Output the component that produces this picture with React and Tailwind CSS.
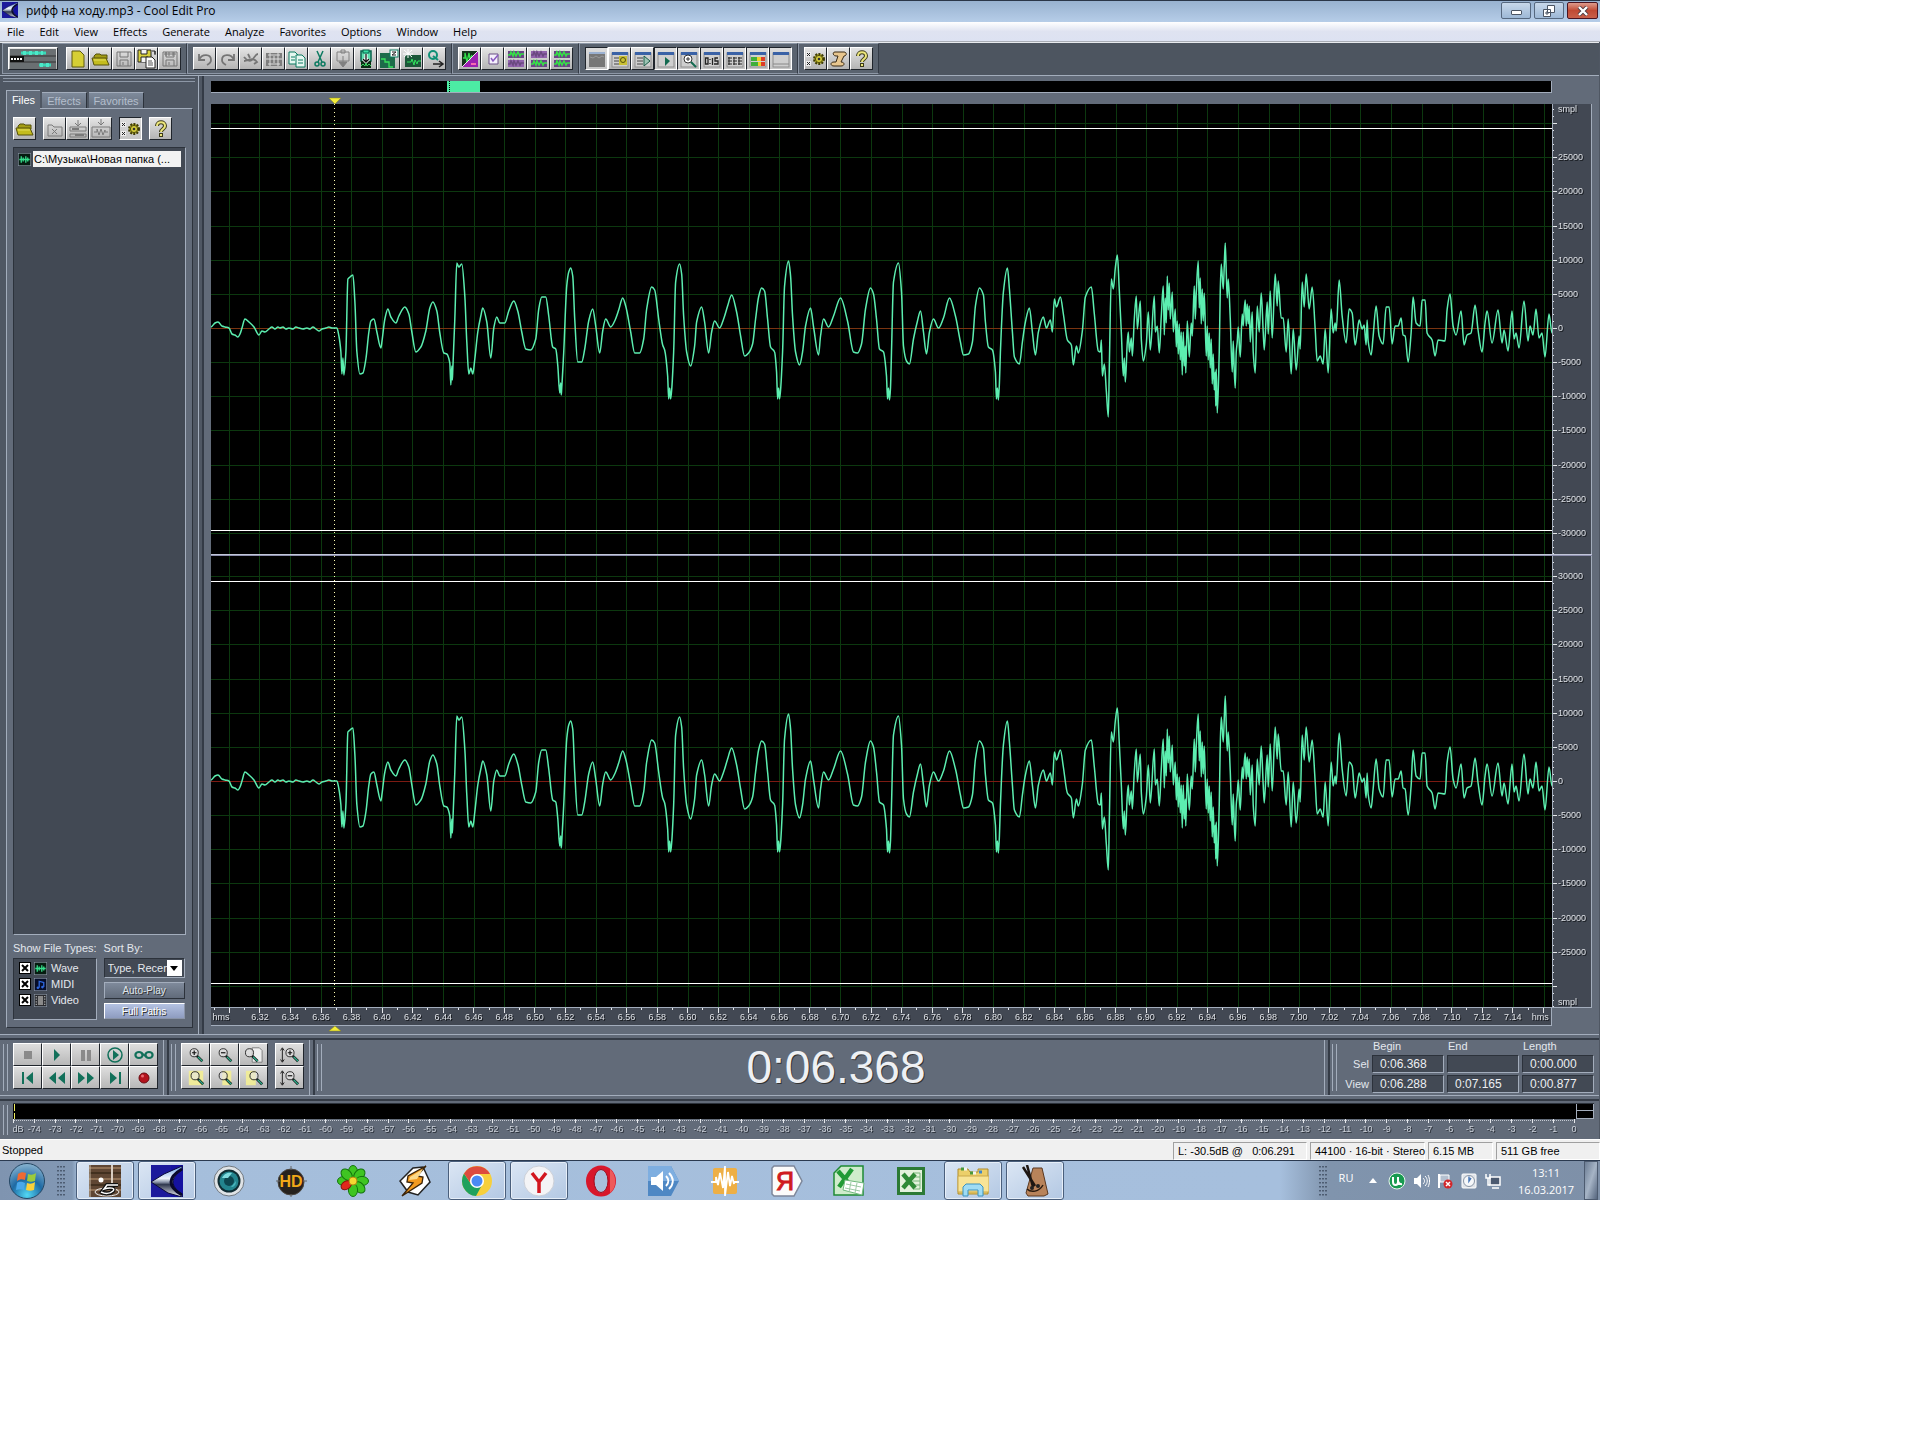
import clsx from "clsx";

// Waveform samples: x, y offset from the zero line
const SAMPLES = [
  0, -1, 4, -5, 7, -6, 11, -2, 14, -1, 18, 0, 21, 6, 24, 7, 27, 9, 29, 6, 31, 0, 34, -9, 38, -6, 43, -1, 48, 7, 51, 3, 54, 4, 58, 1,
  61, -1, 64, 1, 67, -1, 69, 0, 72, -1, 75, 1, 78, 0, 82, 1, 85, -1, 88, 0, 92, 1, 96, 0, 99, 1, 102, -1, 105, 1, 108, 3, 111, 1, 115, 0, 118, -1, 121, 0, 126, 0,
  128, 8, 130, 24, 131, 46, 132, 30, 133, 47, 135, 24, 137, -49, 139, -51, 142, -53, 144, -26, 146, 24, 149, 46, 152, 45, 155, 31, 158, 4, 160, -7, 163, -9,
  166, 4, 170, 20, 171, 14, 174, -9, 177, -19, 180, -11, 185, -5, 188, -12, 194, -21, 198, -14, 201, 4, 205, 24, 210, 19, 215, 3, 219, -20, 222, -26,
  226, -17, 229, 5, 233, 25, 236, 26, 239, 35, 240, 57, 241, 38, 241.5, 52, 242, 41, 244, -9, 246, -65, 248, -61, 251, -64, 254, -32, 256, 14, 258, 46, 260, 40, 262, 46,
  264, 31, 267, 4, 270, -12, 272, -20, 276, -6, 280, 30, 283, 0, 286, -11, 289, -5, 294, -5, 298, -17, 303, -27, 307, -17, 311, 4, 315, 21, 320, 22,
  325, 11, 328, -19, 331, -31, 335, -31, 338, -12, 342, 19, 345, 21, 347, 37, 349, 65, 350, 55, 350.5, 67, 351, 60, 353, 24, 356, -42, 358, -56, 360, -60, 362, -52,
  364, -9, 367, 34, 371, 34, 374, 21, 378, -7, 382, -19, 385, -2, 389, 25, 392, 3, 395, -9, 400, -1, 404, -7, 408, -18, 412, -30, 415, -22, 420, 4,
  424, 25, 429, 25, 433, 11, 436, -19, 441, -41, 444, -38, 448, -9, 452, 17, 454, 22, 457, 48, 458, 71, 459, 60, 460, 71, 461, 62, 463, 24, 465, -46, 469, -64,
  471, -54, 473, -12, 476, 24, 480, 38, 484, 18, 486, -6, 491, -21, 494, -6, 498, 25, 501, 4, 504, -7, 509, 0, 513, -9, 517, -22, 521, -33, 526, -16,
  530, 8, 534, 28, 538, 25, 542, 16, 545, -9, 548, -31, 551, -40, 554, -37, 557, -9, 560, 19, 564, 24, 566, 44, 567, 71, 568, 60, 569, 71, 570, 62, 572, 24, 574, -42,
  578, -67, 580, -52, 582, -12, 585, 24, 589, 37, 592, 24, 595, -2, 600, -20, 603, -1, 608, 27, 610, 8, 613, -9, 618, -1, 623, -12, 630, -30, 637, -7,
  643, 24, 647, 25, 651, 16, 655, -19, 660, -40, 663, -34, 666, -9, 669, 21, 673, 24, 676, 48, 677, 71, 678, 60, 679, 72, 680, 60, 681, 24, 683, -46, 688, -65,
  691, -36, 693, 18, 696, 33, 699, 36, 703, 11, 707, -7, 710, -17, 713, 4, 716, 26, 719, 4, 723, -9, 728, 0, 733, -10, 739, -30, 745, -12, 750, 14,
  753, 27, 758, 26, 762, 14, 765, -22, 769, -40, 773, -33, 775, -6, 778, 19, 782, 22, 785, 44, 786, 71, 787, 60, 788, 72, 789, 55, 790, 24, 793, -36, 797, -60,
  799, -39, 802, 4, 804, 29, 809, 36, 812, 14, 815, -6, 819, -20, 822, 4, 825, 27, 828, 4, 833, -11, 836, 0, 840, -8, 842, 4, 844, -29, 846, -21, 850, -31,
  853, -14, 857, 12, 861, 17, 863, 37, 866, 18, 868, 25, 872, 3, 875, -31, 881, -41, 884, -14, 888, 23, 890, 24, 891, 12, 892, 48, 894, 36, 896, 63,
  898, 89, 899, 38, 901, -49, 903, -39, 905, -60, 907, -73, 909, -37, 911, 4, 913, 48, 914, 30, 915, 54, 917, 14, 918, 4, 919, 24, 921, 10, 922, 28, 924, -9, 926, -32,
  927, 1, 930, -27, 931, 11, 933, 33, 936, 16, 938, -16, 940, 22, 944, -32, 945, 4, 947, -2, 949, 25, 951, -12, 953, -42, 954, 7, 955, -30, 956, -5, 957, -52,
  958, -18, 959, -45, 960, -9, 962, -36, 963, 4, 965, -19, 966, 19, 967, -7, 968, 26, 969, -4, 970, 32, 971, 4, 972, 47, 973, 4, 974, 38, 975, 18, 975.5, 45, 977, -7, 979, 29, 981, -5, 982, 8, 984, -42,
  985, -9, 986, -35, 988, -67, 989, -20, 990, -50, 991, -4, 992, -39, 993, -7, 994, -35, 996, 28, 997, -2, 998, 32, 999, 5, 1000, 40, 1001, 11, 1002, 56, 1003, 26, 1004, 62, 1005, 44, 1005.5, 78, 1006, 41, 1007, 85, 1009, 24,
  1010, -36, 1011, -64, 1013, -39, 1014, -62, 1015, -85, 1016, -56, 1017, -30, 1018, -49, 1020, -10, 1022, 44, 1023, 13, 1024, 42, 1025, 60, 1026, 24, 1027, 14, 1028, -1, 1030, 29, 1032, -14, 1033, -2, 1034, -18, 1035, -28,
  1036, -2, 1037, -24, 1038, -4, 1039, -22, 1040, 14, 1042, -16, 1043, 24, 1045, 45, 1047, -22, 1049, 4, 1051, -35, 1053, 4, 1054, 22, 1057, -26, 1058, 6, 1060, -37, 1062, 10, 1065, -54,
  1067, -22, 1068, -47, 1071, -10, 1073, -10, 1076, 24, 1078, -9, 1081, 46, 1083, 1, 1086, 42, 1089, 8, 1090, 21, 1092, -46, 1094, -21, 1096, -54,
  1099, -19, 1102, -41, 1105, 1, 1107, 33, 1110, 28, 1113, 36, 1115, 1, 1118, 45, 1121, -19, 1123, 5, 1125, -5, 1126, 3, 1129, -48, 1132, -12, 1136, 15,
  1139, -19, 1142, -15, 1145, 17, 1147, 5, 1149, -8, 1152, 1, 1154, -3, 1156, 17, 1157, -8, 1158, 13, 1161, 27, 1163, 8, 1166, -22, 1169, 8, 1173, 16,
  1176, -21, 1179, -21, 1182, 16, 1185, -2, 1188, -2, 1191, -10, 1193, 7, 1195, 8, 1198, 34, 1201, 5, 1203, -31, 1206, -5, 1210, -2, 1212, -28,
  1215, -28, 1217, 5, 1222, 12, 1225, 28, 1228, 12, 1235, 13, 1237, -18, 1240, -34, 1243, -2, 1246, 7, 1251, -17, 1254, 17, 1257, 7, 1261, 5,
  1265, -23, 1268, 2, 1272, 24, 1275, -5, 1277, -17, 1282, 15, 1288, -18, 1292, 15, 1294, 2, 1298, 23, 1302, -17, 1304, 11, 1306, 5, 1309, 20,
  1314, -27, 1318, 13, 1320, -2, 1323, 7, 1326, -19, 1329, 10, 1332, 5, 1335, 29, 1339, -14, 1342, 5,
];

// Cubic curve through every sample, flat at the peaks so that it never overshoots
function buildWavePath(samples) {
  const n = samples.length / 2;
  const x = (i) => samples[i * 2];
  const y = (i) => samples[i * 2 + 1];
  const slope = (i) => (y(i + 1) - y(i)) / (x(i + 1) - x(i));
  const tangent = (i) => {
    if (i === 0 || i === n - 1) return 0;
    const a = slope(i - 1);
    const b = slope(i);
    return a * b <= 0 ? 0 : (2 * a * b) / (a + b);
  };
  let d = `M${x(0)} ${y(0)}`;
  for (let i = 0; i < n - 1; i++) {
    const h = (x(i + 1) - x(i)) / 3;
    d += `C${(x(i) + h).toFixed(1)} ${(y(i) + h * tangent(i)).toFixed(1)} ${(x(i + 1) - h).toFixed(1)} ${(y(i + 1) - h * tangent(i + 1)).toFixed(1)} ${x(i + 1)} ${y(i + 1)}`;
  }
  return d;
}

const WAVE_PATH = buildWavePath(SAMPLES);

const VIEW_START = 6.288;
const VIEW_LENGTH = 0.877;
const CURSOR = "9.24%";

const pct = (t) => `${((t - VIEW_START) / VIEW_LENGTH) * 100}%`;

const GRID_TIMES = Array.from({ length: 44 }, (_, i) => 6.3 + i * 0.02);
const STEP = 34.15; // pixels for 5000 samples

/* ---------- small parts ---------- */

function Ico({ children, size = 20, className }) {
  return (
    <svg viewBox="0 0 20 20" width={size} height={size} fill="none" className={className} aria-hidden="true">
      {children}
    </svg>
  );
}

function ToolButton({ label, pressed, wide, children }) {
  return (
    <button
      type="button"
      aria-label={label}
      className={clsx(
        "flex h-[23px] shrink-0 items-center justify-center border bg-linear-to-b",
        wide ? "w-[50px]" : "w-[23px]",
        pressed
          ? "border-t-[#20252c] border-r-white border-b-white border-l-[#20252c] from-[#dcdcdc] to-[#c6c6c6]"
          : "border-t-white border-r-[#20252c] border-b-[#20252c] border-l-white from-[#e4e4e4] to-[#b4b4b4]"
      )}
    >
      {children}
    </button>
  );
}

function PadButton({ label, children }) {
  return (
    <button
      type="button"
      aria-label={label}
      className="flex h-[23px] w-[29px] items-center justify-center border border-t-white border-r-[#20252c] border-b-[#20252c] border-l-white bg-linear-to-b from-[#dedede] to-[#b8b8b8]"
    >
      {children}
    </button>
  );
}

function Grip() {
  return <div className="my-1 w-[5px] shrink-0 self-stretch border-x border-[#a3adbc]" />;
}

function VSplit() {
  return <div className="w-[6px] shrink-0 self-stretch border-r-2 border-l border-r-[#343b46] border-l-[#a3adbc]" />;
}

function HSplit() {
  return <div className="h-[6px] border-t border-b-2 border-t-[#a3adbc] border-b-[#343b46] bg-[#626b79]" />;
}

/* ---------- toolbar icons ---------- */

const FOLDER = (
  <>
    <path d="M3 15V7l2-2h4l1 1h6v4" fill="#a39c14" stroke="#55510a" />
    <path d="M3 16L1 9h14l3 7z" fill="#c4bc1e" stroke="#55510a" />
    <path d="M3 11h12" stroke="#e4de5a" />
  </>
);

const GEAR = (
  <>
    <path d="M0 3h5v5H0zM0 12h5v5H0z" fill="#eee" />
    <path d="M1 4l3 3m0-3L1 7M1 13l3 3m0-3l-3 3" stroke="#222" />
    <circle cx="13" cy="10" r="5" fill="#c6be28" stroke="#3d3a08" strokeWidth="2" strokeDasharray="2 1.2" />
    <circle cx="13" cy="10" r="3.6" fill="#d3cb3a" stroke="#4f4b0c" />
    <circle cx="13" cy="10" r="1.3" fill="#333" />
  </>
);

const HELP = (
  <>
    <path d="M6 7c0-5 8-5 8 0 0 3-4 3-4 6" stroke="#3c3a18" strokeWidth="4" />
    <path d="M6 7c0-5 8-5 8 0 0 3-4 3-4 6" stroke="#ece67c" strokeWidth="2" />
    <rect x="8.500" y="14.500" width="3" height="3" fill="#ece67c" stroke="#3c3a18" />
  </>
);

const DISK = <path d="M3 3h14v14H3zM6 3v5h8V3M6 17v-6h8v6M9 13v3" />;

const WIN = (
  <>
    <rect x="2" y="4" width="16" height="14" fill="#cfcfcf" stroke="#8d8d8d" />
    <rect x="2" y="3" width="16" height="3" fill="#3a62a6" />
  </>
);

const FILE_ICONS = [
  ["New", <path d="M4 2h8l4 4v12H4z" fill="#d6cf34" stroke="#5d590e" />],
  ["Open", FOLDER],
  ["Save", <g stroke="#757575">{DISK}</g>],
  ["Save As", <>
    <path d="M1 1h13v12H1z" fill="#d8d03c" stroke="#222" />
    <path d="M4 1v4h6V1M4 13V8h7v5" fill="#f3f3f3" stroke="#222" />
    <path d="M15 2h3v3m0-3v4" stroke="#222" />
    <path d="M9 8h6l3 3v8H9z" fill="#fff" stroke="#222" />
    <path d="M11 12h4m-4 2h5m-5 2h5" stroke="#555" />
  </>],
  ["Save Selection", <><g stroke="#757575">{DISK}</g><path d="M4 5h12M6 3v4m3-4v4m4-4v4" stroke="#757575" /></>],
];

const EDIT_ICONS = [
  ["Undo", <path d="M4 5v6h6M4 11c3-7 12-6 12 0 0 3-2 4-4 5" stroke="#757575" strokeWidth="1.800" />],
  ["Redo", <path d="M16 5v6h-6M16 11C13 4 4 5 4 11c0 3 2 4 4 5" stroke="#757575" strokeWidth="1.800" />],
  ["Repeat", <path d="M3 8c3 4 7 5 9 2s3-5 5-5M3 12c5 0 8-5 13 1l-3 2M7 5l2 4" stroke="#757575" strokeWidth="1.800" />],
  ["Trim", <><rect x="2" y="4" width="16" height="13" fill="#7d7d7d" /><path d="M2 10h16M4 6h12M4 15h12M6 4v13M10 7v7M14 4v13" stroke="#ddd" /></>],
  ["Copy", <>
    <path d="M2 3h6l3 3v9H2z" fill="#e6f7f0" stroke="#0c7a60" />
    <path d="M9 6h6l3 3v9H9z" fill="#e6f7f0" stroke="#0c7a60" />
    <path d="M4 8h4M4 11h4M11 11h5m-5 3h5" stroke="#0c7a60" />
  </>],
  ["Cut", <>
    <path d="M7 2l5 11M13 2L8 13" stroke="#0c7a60" strokeWidth="1.500" />
    <circle cx="7" cy="15" r="2" stroke="#0c7a60" strokeWidth="1.500" />
    <circle cx="13" cy="15" r="2" stroke="#0c7a60" strokeWidth="1.500" />
  </>],
  ["Paste", <><path d="M4 3h12v9H4zM8 1h4v3H8z" stroke="#808080" /><path d="M10 7v10m-4-4l4 5 4-5z" fill="#808080" stroke="#808080" /></>],
  ["Mix Paste", <>
    <rect x="5" y="2" width="10" height="10" fill="#5fe0b0" stroke="#08634c" strokeWidth="1.500" />
    <rect x="7" y="1" width="6" height="3" fill="#3be0a4" stroke="#08634c" />
    <rect x="5" y="12" width="10" height="7" fill="#0a2c14" />
    <path d="M10 5v7m-3-2l3 3 3-3" stroke="#fff" strokeWidth="3" />
    <path d="M10 5v7m-3-2l3 3 3-3" stroke="#111" strokeWidth="1.300" />
    <path d="M5 17l2-2 2 2 1-3 1 3 2-2 2 2" stroke="#35d35c" />
  </>],
  ["Zero Cross", <>
    <rect x="1" y="4" width="15" height="15" fill="#1d6b4a" />
    <path d="M2 10h4v3h4v5h4" stroke="#38e25c" strokeWidth="1.300" />
    <rect x="11" y="1" width="8" height="7" fill="#fff" stroke="#0c7a60" />
    <path d="M13 3h4l-4 3h4" stroke="#222" />
  </>],
  ["Click Removal", <>
    <rect x="3" y="6" width="16" height="12" fill="#1b5638" />
    <path d="M5 13h4l1-3 2 6 1-5 2 4 1-3h3" stroke="#31e05c" />
    <path d="M6 0v9M2 1l8 7M10 1L2 8M1 5h10" stroke="#fff" />
  </>],
  ["Quick Filter", <>
    <circle cx="8" cy="6" r="4" stroke="#109076" strokeWidth="2" />
    <path d="M8 7l5 4" stroke="#109076" strokeWidth="2" />
    <path d="M8 15h9m-3-3l4 3-4 3" stroke="#222" strokeWidth="1.500" />
  </>],
];

const WavePair = ({ a, b }) => (
  <>
    <rect x="2" y="2" width="16" height="7" fill={a ? "#6b4386" : "#9163ac"} />
    <rect x="2" y="11" width="16" height="7" fill={b ? "#6b4386" : "#9163ac"} />
    <path d="M2 6h2l1-3 2 4 1-4 2 4 2-4 2 4 1-2h3" stroke={a ? "#35e046" : "#6b4a80"} strokeWidth="1.600" />
    <path d="M2 15h2l1-3 2 4 1-4 2 4 2-4 2 4 1-2h3" stroke={b ? "#35e046" : "#6b4a80"} strokeWidth="1.600" />
  </>
);

const CHANNEL_ICONS = [
  ["Spectral View", <>
    <path d="M2 2h16L2 18z" fill="#16321c" />
    <path d="M18 2v16H2z" fill="#9c1fb0" />
    <path d="M3 9h2V4l2 9 2-9 1 6 2-4" stroke="#33e04c" strokeWidth="1.300" />
    <path d="M2 18L18 2" stroke="#e8e8e8" />
    <path d="M11 15h5" stroke="#f56ab0" strokeWidth="2" />
  </>],
  ["Snapping", <><path d="M6 5h9v10H6z" fill="#f5f0fb" stroke="#6a5086" /><path d="M8 9l2 3 5-6" stroke="#8a5ac0" strokeWidth="1.500" /></>],
  ["Left Channel", <WavePair a />],
  ["Right Channel", <WavePair b />],
  ["Both Channels", <WavePair a b />],
];

const WINDOW_ICONS = [
  ["Organizer", true, <><rect x="2" y="4" width="16" height="14" fill="#777" /><rect x="2" y="3" width="16" height="2" fill="#9ab0d0" /><path d="M3 8l3 1 3-2 3 2 3-2 2 1" stroke="#999" /></>],
  ["Cue List", false, <>{WIN}<path d="M4 9h5M4 12h5M4 15h6" stroke="#444" /><rect x="9" y="7" width="8" height="9" fill="#c9c034" /><circle cx="13" cy="11" r="2.500" stroke="#55500c" /></>],
  ["Play List", false, <>{WIN}<path d="M4 9h6M4 12h6M4 15h6" stroke="#444" /><path d="M11 7l6 5-6 5z" fill="#9cc4b4" stroke="#1c5c48" /></>],
  ["Transport", true, <>{WIN}<path d="M9 8l5 4-5 5z" fill="#126a50" /></>],
  ["Zoom Controls", true, <>{WIN}<circle cx="9" cy="10" r="4" fill="#fff" stroke="#333" /><path d="M7 10h4M9 8v4" stroke="#333" /><path d="M12 13l5 5" stroke="#126a50" strokeWidth="2" /></>],
  ["Time Window", true, <>{WIN}<path d="M3.500 9h2.500v6H3.500zM8 10v1m0 3v1M10.500 9v7M16 9h-3v3h3v3h-4" stroke="#222" strokeWidth="1.300" /></>],
  ["Selection View", true, <>{WIN}<path d="M3 9h4M3 12h4M3 15h4M8 9h4m-4 3h4m-4 3h4m1-6h4m-4 3h4m-4 3h4M4 8v8m5-8v8m5-8v8" stroke="#222" /></>],
  ["Level Meters", true, <>{WIN}<path d="M3 8h6v4H3zM3 13h7v4H3z" fill="#3fae3a" /><path d="M9 8h4v4H9zM10 13h3v4h-3z" fill="#ecd22c" /><path d="M13 8h4v4h-4zM13 13h4v4h-4z" fill="#dd3d26" /></>],
  ["Status Bar", true, <>{WIN}<path d="M2 15h16" stroke="#888" /></>],
];

const HELP_ICONS = [
  ["Settings", GEAR],
  ["Scripts", <path d="M6 3h9c3 0 3 4 0 4l-3 6c4 0 4 4 0 4H5c-4 0-4-4 0-4h2l2-6H7c-3 0-4-4-1-4z" fill="#e8c68e" stroke="#3b2b14" />],
  ["Help", HELP],
];

function ToolGroup({ children }) {
  return (
    <div className="flex h-[31px] items-center border-y border-r border-l border-y-[#8d97a6] border-r-[#343b46] border-l-[#8d97a6] bg-[#5a636f] px-[5px]">
      {children}
    </div>
  );
}

/* ---------- logos ---------- */

function AppLogo({ size }) {
  return (
    <svg viewBox="0 0 32 32" width={size} height={size} aria-hidden="true">
      <defs>
        <linearGradient id={`silver${size}`} x1="0" y1="0" x2="0" y2="1">
          <stop offset="0" stopColor="#6fa4e8" />
          <stop offset=".4" stopColor="#eef4fb" />
          <stop offset=".52" stopColor="#8a94a8" />
          <stop offset=".6" stopColor="#30384e" />
          <stop offset="1" stopColor="#eef1f6" />
        </linearGradient>
      </defs>
      <rect width="32" height="32" fill="#1c1a9c" />
      <path d="M20 0h12v32H20z" fill="#1512a0" />
      <path d="M0 17L13 9 31 1v4c-6 4-9 8-9 12s3 8 9 12v3l-14-4z" fill={`url(#silver${size})`} stroke="#0a0a3a" />
      <path d="M31 4c-7 4-11 8-11 13s4 9 11 13" stroke="#0a0a2c" strokeWidth="3" fill="none" />
    </svg>
  );
}

/* ---------- header ---------- */

function TitleBar() {
  return (
    <header className="flex h-[22px] items-start border-t border-[#2a3648] bg-linear-to-b from-[#98b2d0] to-[#b6cde8] pr-[2px] pl-[2px]">
      <div className="pt-px">
        <AppLogo size={16} />
      </div>
      <h1 className="ml-2 font-['Open_Sans','Noto_Sans',sans-serif] text-[12px] leading-[20px] text-black">
        рифф на ходу.mp3 - Cool Edit Pro
      </h1>
      <div className="ml-auto flex gap-[3px] pt-px">
        <button type="button" aria-label="Minimize" className="flex h-[17px] w-[30px] items-center justify-center rounded-[2px] border border-[#56687f] bg-linear-to-b from-[#c8d8ea] to-[#9db8d6]">
          <span className="mt-1 h-[5px] w-[11px] rounded-[1px] border border-[#4b5564] bg-white" />
        </button>
        <button type="button" aria-label="Restore" className="flex h-[17px] w-[30px] items-center justify-center rounded-[2px] border border-[#56687f] bg-linear-to-b from-[#c8d8ea] to-[#9db8d6]">
          <svg viewBox="0 0 12 12" width="12" height="12" fill="#fff" stroke="#4b5564">
            <path d="M4.500 .5h7v7h-7zM.5 4.500h7v7h-7zM3 7h2v2H3z" />
          </svg>
        </button>
        <button type="button" aria-label="Close" className="flex h-[17px] w-[31px] items-center justify-center rounded-[2px] border border-[#4a1420] bg-linear-to-b from-[#dd9a8c] via-[#c04a34] to-[#c8604a]">
          <svg viewBox="0 0 12 10" width="12" height="10">
            <path d="M2 1l8 8M10 1L2 9" stroke="#4a3a40" strokeWidth="4" />
            <path d="M2 1l8 8M10 1L2 9" stroke="#fff" strokeWidth="2.400" />
          </svg>
        </button>
      </div>
    </header>
  );
}

const MENU = ["File", "Edit", "View", "Effects", "Generate", "Analyze", "Favorites", "Options", "Window", "Help"];

function MenuBar() {
  return (
    <nav className="flex h-[20px] gap-[15px] border-b border-[#a9adb5] bg-linear-to-b from-white via-[#dfe3f1] to-[#dde2f2] pl-[7px] font-['Open_Sans','Noto_Sans',sans-serif] text-[11px] leading-[19px] text-black">
      {MENU.map((m) => (
        <a key={m} href="#menu">{m}</a>
      ))}
    </nav>
  );
}

function Toolbar() {
  return (
    <div className="flex h-[33px] items-start border-t border-[#e8eaee] bg-[#4d5560] pl-[2px]">
      <ToolGroup>
        <ToolButton label="Multitrack View" wide>
          <svg viewBox="0 0 46 20" width="46" height="20">
            <rect width="46" height="20" fill="#6a6f72" />
            <path d="M0 7h46M0 13h46" stroke="#333" />
            <path d="M11 4h25M29 16h12" stroke="#38d8b8" strokeWidth="3" />
            <path d="M13 4h20M30 16h10" stroke="#4de8c8" strokeWidth="4" strokeDasharray="3 3" />
            <path d="M0 10h14" stroke="#111" strokeWidth="6" />
            <path d="M1 10h12" stroke="#fff" strokeWidth="2" strokeDasharray="2 1" />
          </svg>
        </ToolButton>
        <div className="w-2" />
        {FILE_ICONS.map(([label, icon]) => (
          <ToolButton key={label} label={label}><Ico>{icon}</Ico></ToolButton>
        ))}
      </ToolGroup>
      <ToolGroup>
        {EDIT_ICONS.map(([label, icon]) => (
          <ToolButton key={label} label={label}><Ico>{icon}</Ico></ToolButton>
        ))}
      </ToolGroup>
      <ToolGroup>
        {CHANNEL_ICONS.map(([label, icon]) => (
          <ToolButton key={label} label={label}><Ico>{icon}</Ico></ToolButton>
        ))}
      </ToolGroup>
      <ToolGroup>
        {WINDOW_ICONS.map(([label, pressed, icon]) => (
          <ToolButton key={label} label={label} pressed={pressed}><Ico>{icon}</Ico></ToolButton>
        ))}
      </ToolGroup>
      <ToolGroup>
        {HELP_ICONS.map(([label, icon]) => (
          <ToolButton key={label} label={label}><Ico>{icon}</Ico></ToolButton>
        ))}
      </ToolGroup>
    </div>
  );
}

/* ---------- organizer ---------- */

const WAVE_TYPE = <><rect width="20" height="20" fill="#061c10" stroke="#8b95a5" strokeWidth="2" /><path d="M2 10h3V5v10-5h3V7v6-3h4V5v10-5h3V7v6-3h3" stroke="#35e08c" strokeWidth="2" /></>;
const MIDI_TYPE = <><rect width="20" height="20" fill="#050c28" stroke="#8b95a5" strokeWidth="2" /><path d="M8 15V5l7 2v7" stroke="#2d66dd" strokeWidth="2" /><circle cx="6" cy="15" r="2" fill="#2d66dd" /><circle cx="13" cy="14" r="2" fill="#2d66dd" /></>;
const VIDEO_TYPE = <><rect width="20" height="20" fill="#26282c" stroke="#8b95a5" strokeWidth="2" /><rect x="6" y="3" width="8" height="14" fill="#8a8a8a" /><path d="M3.500 3v14M16.500 3v14" stroke="#aaa" strokeWidth="2" strokeDasharray="2 2" /></>;

const FILE_TYPES = [["Wave", WAVE_TYPE], ["MIDI", MIDI_TYPE], ["Video", VIDEO_TYPE]];

function Organizer() {
  return (
    <aside className="flex w-[198px] shrink-0 flex-col bg-[#4f5763] pr-[5px] pb-[6px] pl-[6px]">
      <div className="mt-[2px] -mr-[2px] -ml-[3px] h-[4px] border-y border-[#8d97a6]" />
      <div role="tablist" className="mt-[8px] flex items-end text-[11px] leading-[17px]">
        <button role="tab" aria-selected="true" type="button" className="relative z-10 -mb-px h-[19px] w-[34px] border-t border-l border-[#a3adbc] bg-[#626b79] text-white">
          Files
        </button>
        <button role="tab" type="button" className="ml-[2px] h-[16px] w-[45px] border-t border-r border-t-[#a3adbc] border-r-[#2c323b] bg-linear-to-b from-[#7e8a9b] to-[#66707f] text-[#b4becc]">
          Effects
        </button>
        <button role="tab" type="button" className="ml-[2px] h-[16px] w-[55px] border-t border-r border-t-[#a3adbc] border-r-[#2c323b] bg-linear-to-b from-[#7e8a9b] to-[#66707f] text-[#b4becc]">
          Favorites
        </button>
      </div>

      <div className="flex flex-1 flex-col border border-t-[#a3adbc] border-r-[#2c323b] border-b-[#2c323b] border-l-[#a3adbc] bg-[#626b79] px-[6px] pt-[8px] pb-[7px]">
        <div className="flex">
          <ToolButton label="Open file"><Ico>{FOLDER}</Ico></ToolButton>
          <div className="w-[7px]" />
          <ToolButton label="Close file"><Ico><path d="M3 17V6h4l2 2h8v9zM7 10l5 5m0-5l-5 5" stroke="#7a7a7a" /></Ico></ToolButton>
          <ToolButton label="Insert into multitrack"><Ico><path d="M10 1v5M7 4l3 3 3-3M2 8h16v4H2zM2 15h16v3H2z" stroke="#7a7a7a" /><path d="M4 10h7M7 16h9" stroke="#7a7a7a" strokeWidth="2" /></Ico></ToolButton>
          <ToolButton label="Edit file"><Ico><path d="M10 0v5M7 3l3 3 3-3M1 8h18v10H1zM3 13h3v-3l2 6 2-6 2 6 2-5v2h3" stroke="#7a7a7a" /></Ico></ToolButton>
          <div className="w-[7px]" />
          <ToolButton label="Advanced options" pressed><Ico>{GEAR}</Ico></ToolButton>
          <div className="w-[7px]" />
          <ToolButton label="Organizer help"><Ico>{HELP}</Ico></ToolButton>
        </div>

        <ul className="mt-[7px] min-h-[780px] flex-1 border border-t-[#2c323b] border-r-[#a3adbc] border-b-[#a3adbc] border-l-[#2c323b] bg-[#424954] py-[3px] pr-[4px] pl-[4px]">
          <li className="flex h-[16px] items-center gap-[2px]">
            <Ico size={13} className="shrink-0">{WAVE_TYPE}</Ico>
            <span className="flex-1 overflow-hidden bg-[#f2f2f2] pl-px text-[11px] leading-[16px] whitespace-nowrap text-black">
              C:\Музыка\Новая папка (...
            </span>
          </li>
        </ul>

        <div className="mt-[6px] flex gap-[7px] text-[11px] text-[#e4e8ee]">
          <fieldset className="w-[83px]">
            <legend className="leading-[14px] whitespace-nowrap">Show File Types:</legend>
            <div className="mt-[3px] h-[62px] border border-t-[#2c323b] border-r-[#a3adbc] border-b-[#a3adbc] border-l-[#2c323b] bg-[#424954] pt-px pl-[5px]">
              {FILE_TYPES.map(([label, icon]) => (
                <label key={label} className="flex h-[16px] items-center text-[11px]">
                  <span className="relative block h-[12px] w-[12px]">
                    <input type="checkbox" defaultChecked className="block h-[12px] w-[12px] appearance-none border border-black bg-white" />
                    <svg viewBox="0 0 12 12" width="12" height="12" className="pointer-events-none absolute inset-0">
                      <path d="M3 3l6 6M9 3L3 9" stroke="#000" strokeWidth="2" />
                    </svg>
                  </span>
                  <Ico size={13} className="mr-1 ml-[3px]">{icon}</Ico>
                  {label}
                </label>
              ))}
            </div>
          </fieldset>
          <div className="flex w-[81px] flex-col">
            <label htmlFor="sort" className="leading-[14px]">Sort By:</label>
            <div className="relative mt-[3px]">
              <select id="sort" className="block h-[20px] w-full appearance-none border border-t-[#2c323b] border-r-[#a3adbc] border-b-[#a3adbc] border-l-[#2c323b] bg-[#424954] pl-[3px] text-[11px] leading-[16px] text-[#e4e8ee]">
                <option>Type, Recent</option>
              </select>
              <span className="pointer-events-none absolute top-[2px] right-[3px] flex h-[16px] w-[15px] items-center justify-center bg-white">
                <svg viewBox="0 0 8 5" width="8" height="5"><path d="M0 0h8L4 5z" /></svg>
              </span>
            </div>
            <button type="button" className="mt-[4px] h-[17px] border border-t-[#a3adbc] border-r-[#2c323b] border-b-[#2c323b] border-l-[#a3adbc] bg-linear-to-b from-[#7f8a9b] to-[#616b7a] text-[10px] leading-[13px] text-[#dfe4ea] [text-shadow:1px_1px_0_#333]">
              Auto-Play
            </button>
            <button type="button" className="mt-[4px] h-[16px] border border-t-white border-r-[#8a94a8] border-b-[#8a94a8] border-l-white bg-linear-to-b from-[#b4c2e2] to-[#8e9cc0] text-[10px] leading-[13px] text-white [text-shadow:1px_1px_0_#333]">
              Full Paths
            </button>
          </div>
        </div>
      </div>
    </aside>
  );
}

/* ---------- wave display ---------- */

function Channel({ zero, height, zeroColor }) {
  const rows = [];
  for (let i = -6; i <= 6; i++) rows.push(Math.round(zero + i * STEP));
  return (
    <svg width="100%" height={height} className="block bg-black" shapeRendering="crispEdges">
      {GRID_TIMES.map((t) => (
        <line key={t} x1={pct(t)} x2={pct(t)} y1="0" y2={height} stroke="#0c380f" />
      ))}
      {rows.map((y) => (
        <line key={y} x1="0" x2="100%" y1={y} y2={y} stroke="#0c380f" />
      ))}
      <line x1="0" x2="100%" y1={zero} y2={zero} stroke={zeroColor} />
      <line x1="0" x2="100%" y1={zero - 200} y2={zero - 200} stroke="#fff" />
      <line x1="0" x2="100%" y1={zero + 202} y2={zero + 202} stroke="#fff" />
      <line x1={CURSOR} x2={CURSOR} y1="0" y2={height} stroke="#ffffb4" strokeDasharray="1 3" />
      <svg x="0" y="0" width="100%" height={height} viewBox={`0 ${-zero} 1342 ${height}`} preserveAspectRatio="none">
        <path
          d={WAVE_PATH}
          fill="none"
          stroke="#5ceeb0"
          strokeWidth="1.500"
          shapeRendering="geometricPrecision"
          vectorEffect="non-scaling-stroke"
        />
      </svg>
    </svg>
  );
}

function AmplitudeAxis({ zero, height, labels, unitY }) {
  const ticks = [];
  for (let i = -33; i <= 33; i++) {
    const y = Math.round(zero + (i * STEP) / 5);
    if (y > 0 && y < height) ticks.push([y, i % 5 === 0]);
  }
  return (
    <svg width="100%" height={height} className="block border-r border-l border-[#a3adbc] bg-[#424853] font-['Liberation_Sans',Arial,sans-serif] text-[9px]">
      {ticks.map(([y, major]) => (
        <line key={y} x1="0" x2={major ? 4 : 1} y1={y} y2={y} stroke="#e6e8ec" shapeRendering="crispEdges" />
      ))}
      <g fill="#dfe2e7" className="drop-shadow-[1px_1px_0_#15181d]">
        <text x="5" y={unitY}>smpl</text>
        {labels.map((n) => (
          <text key={n} x="5" y={Math.round(zero - n * STEP / 5000) + 3}>{n}</text>
        ))}
      </g>
    </svg>
  );
}

function TimeAxis() {
  const minor = GRID_TIMES.map((t) => t - 0.01);
  return (
    <svg width="100%" height="19" className="block border-t border-r border-b border-[#a3adbc] bg-[#424853] font-['Liberation_Sans',Arial,sans-serif] text-[9px]">
      {GRID_TIMES.map((t) => (
        <line key={t} x1={pct(t)} x2={pct(t)} y1="0" y2="5" stroke="#e6e8ec" shapeRendering="crispEdges" />
      ))}
      {minor.map((t) => (
        <line key={t} x1={pct(t)} x2={pct(t)} y1="0" y2="2" stroke="#e6e8ec" shapeRendering="crispEdges" />
      ))}
      <g fill="#dfe2e7" textAnchor="middle" className="drop-shadow-[1px_1px_0_#15181d]">
        <text x="10" y="12">hms</text>
        {GRID_TIMES.slice(1, 43).map((t) => (
          <text key={t} x={pct(t)} y="12">{t.toFixed(2)}</text>
        ))}
        <text x="99.2%" y="12">hms</text>
      </g>
    </svg>
  );
}

function Marker({ up, height }) {
  return (
    <svg width="100%" height={height} className="block">
      <svg x={CURSOR} overflow="visible">
        <path d={up ? "M0 0l6 5H-6z" : `M-6 ${height - 6}H6L0 ${height}z`} fill="#f4ee3a" stroke="#8a8418" strokeWidth=".5" />
      </svg>
    </svg>
  );
}

function WaveDisplay() {
  return (
    <section className="flex min-w-0 flex-1 flex-col bg-[#626b79] pt-[5px] pr-[7px] pl-[7px]">
      <div className="mr-[40px] flex h-[12px] border-r border-b border-[#a3adbc] bg-black">
        <div className="w-[17.6%]" />
        <div className="w-[2.5%] bg-[#4ceca4] pl-[2px]">
          <div className="h-full w-px border-l border-dotted border-black" />
        </div>
      </div>
      <div className="mr-[40px]"><Marker height={11} /></div>
      <div className="flex">
        <div className="min-w-0 flex-1">
          <Channel zero={224} height={450} zeroColor="#7a3410" />
        </div>
        <div className="w-[40px]">
          <AmplitudeAxis zero={224} height={450} unitY={8} labels={[25000, 20000, 15000, 10000, 5000, 0, -5000, -10000, -15000, -20000, -25000, -30000]} />
        </div>
      </div>
      <div className="h-[2px] border-t border-[#c2c6d8] bg-[#8d8fae]" />
      <div className="flex">
        <div className="min-w-0 flex-1">
          <Channel zero={225} height={451} zeroColor="#7c1a12" />
        </div>
        <div className="w-[40px] border-b border-[#a3adbc]">
          <AmplitudeAxis zero={225} height={451} unitY={449} labels={[30000, 25000, 20000, 15000, 10000, 5000, 0, -5000, -10000, -15000, -20000, -25000]} />
        </div>
      </div>
      <div className="mr-[40px] -mt-px">
        <TimeAxis />
        <Marker up height={8} />
      </div>
    </section>
  );
}

/* ---------- transport ---------- */

const G = "#12705a";

const TRANSPORT = [
  ["Stop", <path d="M6 6h8v8H6z" fill="#8a8a8a" />],
  ["Play", <path d="M7 4l6 6-6 6z" fill={G} />],
  ["Pause", <path d="M5 5h4v11H5zM11 5h4v11h-4z" fill="#8a8a8a" />],
  ["Play to End", <><circle cx="10" cy="10" r="7" stroke={G} strokeWidth="1.500" /><path d="M8 5l6 5-6 5z" fill={G} /></>],
  ["Loop", <><ellipse cx="5" cy="10" rx="3.600" ry="3" stroke={G} strokeWidth="2.200" /><ellipse cx="15" cy="10" rx="3.600" ry="3" stroke={G} strokeWidth="2.200" /><path d="M7 8l6 4" stroke={G} strokeWidth="2" /></>],
  ["Go to Beginning", <path d="M4 4h2v12H4zM15 4v12l-7-6z" fill={G} />],
  ["Rewind", <path d="M9 4v12l-7-6zM18 4v12l-7-6z" fill={G} />],
  ["Fast Forward", <path d="M2 4v12l7-6zM11 4v12l7-6z" fill={G} />],
  ["Go to End", <path d="M5 4v12l7-6zM14 4h2v12h-2z" fill={G} />],
  ["Record", <><circle cx="10" cy="10" r="5" fill="#b3121c" stroke="#6a0a10" /><circle cx="8.500" cy="8" r="1.500" fill="#e86a70" /></>],
];

function Lens({ sign, x = 0 }) {
  return (
    <g transform={`translate(${x} 0)`}>
      <path d="M11 11l6 6" stroke="#111" strokeWidth="3" />
      <path d="M12 12l5 5" stroke="#2fae8c" strokeWidth="1.500" />
      <circle cx="8" cy="7.500" r="4.500" fill="#e6e6e6" fillOpacity=".6" stroke="#222" />
      {sign && <path d={sign === "+" ? "M5.500 7.500h5M8 5v5" : "M5.500 7.500h5"} stroke="#111" strokeWidth="1.300" />}
    </g>
  );
}

const PAGE = "#efeb9a";

const ZOOMS = [
  ["Zoom In", <Lens sign="+" />],
  ["Zoom Out", <Lens sign="-" />],
  ["Zoom Full", <><path d="M8 2h8l3 3v13H8z" fill="#eee" stroke="#777" /><Lens x={-3} /></>],
  ["Zoom to Selection", <><path d="M2 2h16v16H2z" fill={PAGE} /><Lens x={1} /></>],
  ["Zoom to Left Edge", <><path d="M7 2h10v16H7z" fill={PAGE} /><Lens /></>],
  ["Zoom to Right Edge", <><path d="M1 2h11v16H1z" fill={PAGE} /><Lens x={2} /></>],
];

const VERTICAL = <path d="M1.500 3v14M-.5 5l2-3 2 3M-.5 15l2 3 2-3" stroke="#111" />;

const FIELD = "h-[18px] w-[72px] border border-t-[#2c323b] border-r-[#a3adbc] border-b-[#a3adbc] border-l-[#2c323b] bg-[#424954] pl-[7px] text-[12px] leading-[16px] text-[#eceef2]";

function TransportRow() {
  return (
    <div className="flex h-[55px] items-stretch bg-[#626b79] pl-[3px]">
      <Grip />
      <div className="mt-[3px] ml-[5px] grid grid-cols-5 content-start">
        {TRANSPORT.map(([label, icon]) => (
          <PadButton key={label} label={label}><Ico>{icon}</Ico></PadButton>
        ))}
      </div>
      <div className="w-[5px]" />
      <VSplit />
      <div className="w-[2px]" />
      <Grip />
      <div className="mt-[3px] ml-[5px] grid grid-cols-3 content-start">
        {ZOOMS.map(([label, icon]) => (
          <PadButton key={label} label={label}><Ico size={18}>{icon}</Ico></PadButton>
        ))}
      </div>
      <div className="mt-[3px] ml-[7px] flex flex-col">
        <PadButton label="Vertical Zoom In"><Ico size={18} className="overflow-visible">{VERTICAL}<Lens sign="+" x={2} /></Ico></PadButton>
        <PadButton label="Vertical Zoom Out"><Ico size={18} className="overflow-visible">{VERTICAL}<Lens sign="-" x={2} /></Ico></PadButton>
      </div>
      <div className="w-[5px]" />
      <VSplit />
      <div className="w-[2px]" />
      <Grip />
      <output className="flex flex-1 items-center justify-center pb-[2px] pl-[26px] text-[46px] leading-none text-[#eef0f3] [text-shadow:1px_1px_0_#333]">
        0:06.368
      </output>
      <VSplit />
      <div className="w-[2px]" />
      <Grip />
      <div className="mr-[5px] ml-[2px] grid grid-cols-[30px_72px_72px_72px] content-start gap-x-[3px] gap-y-[2px] text-[11px] text-[#e4e8ee]">
        <span />
        <span className="pl-px leading-[13px]">Begin</span>
        <span className="pl-px leading-[13px]">End</span>
        <span className="pl-px leading-[13px]">Length</span>
        <span className="text-right leading-[18px]">Sel</span>
        <input aria-label="Selection begin" readOnly value="0:06.368" className={FIELD} />
        <input aria-label="Selection end" readOnly value="" className={FIELD} />
        <input aria-label="Selection length" readOnly value="0:00.000" className={FIELD} />
        <span className="text-right leading-[18px]">View</span>
        <input aria-label="View begin" readOnly value="0:06.288" className={FIELD} />
        <input aria-label="View end" readOnly value="0:07.165" className={FIELD} />
        <input aria-label="View length" readOnly value="0:00.877" className={FIELD} />
      </div>
    </div>
  );
}

const DB = Array.from({ length: 75 }, (_, i) => i - 74);
const dbX = (db) => `${((1562 + db * 20.82) / 1582) * 100}%`;

function LevelMeter() {
  return (
    <div className="flex h-[38px] bg-[#626b79] pr-[5px] pl-[3px]">
      <Grip />
      <div className="ml-[5px] flex-1 pt-[2px]">
        <div className="flex h-[16px] border-t border-[#2c323b] bg-black">
          <div className="flex flex-1 flex-col gap-[2px] pl-px">
            <span className="h-[7px] w-px bg-[#eeee60]" />
            <span className="h-[7px] w-px bg-[#eeee60]" />
          </div>
          <div className="w-[18px] border border-t-0 border-[#a3adbc]">
            <div className="h-[7px] border-b border-[#a3adbc]" />
          </div>
        </div>
        <svg width="100%" height="18" className="block font-['Liberation_Sans',Arial,sans-serif] text-[9px]">
          <line x1="1" x2={dbX(0)} y1="1" y2="1" stroke="#c4c9d1" strokeDasharray="1 1" shapeRendering="crispEdges" />
          {[-75, ...DB].map((d) => (
            <line key={d} x1={dbX(d)} x2={dbX(d)} y1="0" y2="4" stroke="#e6e8ec" shapeRendering="crispEdges" />
          ))}
          <g fill="#ccd1d9" textAnchor="middle" className="drop-shadow-[1px_1px_0_#2c323b]">
            <text x="5" y="13">dB</text>
            {DB.map((d) => (
              <text key={d} x={dbX(d)} y="13">{d}</text>
            ))}
          </g>
        </svg>
      </div>
    </div>
  );
}

const CELL = "border border-t-[#a0a0a0] border-r-white border-b-white border-l-[#a0a0a0] pl-1";

function StatusBar() {
  return (
    <footer className="flex h-[21px] gap-[3px] border-t border-white bg-[#f0f0f0] pt-[2px] pl-[2px] text-[11px] leading-[16px] whitespace-pre text-black">
      <div className="flex-1">Stopped</div>
      <div className={clsx(CELL, "w-[134px]")}>L: -30.5dB @   0:06.291</div>
      <div className={clsx(CELL, "w-[115px]")}>44100 · 16-bit · Stereo</div>
      <div className={clsx(CELL, "w-[65px]")}>6.15 MB</div>
      <div className={clsx(CELL, "w-[104px]")}>511 GB free</div>
    </footer>
  );
}

/* ---------- taskbar ---------- */

function Svg32({ children }) {
  return <svg viewBox="0 0 32 32" width="32" height="32" fill="none" aria-hidden="true">{children}</svg>;
}

const APPS = [
  ["Guitar Pro", true, <Svg32>
    <rect width="32" height="32" fill="#5f4633" />
    <path d="M0 3h32M0 14h32M0 25h32" stroke="#8f7054" strokeWidth="2" />
    <path d="M0 8h32M0 20h32" stroke="#42301f" strokeWidth="2" />
    <path d="M23 0v20" stroke="#d8ccc0" strokeWidth="2" />
    <path d="M1 0v32" stroke="#c8b8a4" />
    <circle cx="12" cy="15" r="2.500" fill="#fff" />
    <ellipse cx="18" cy="27" rx="12" ry="4" stroke="#eee" />
    <path d="M29 20H18l-3 4c6-2 12-1 9 2s-8 3-12 1" stroke="#111" strokeWidth="4" />
    <path d="M29 20H18l-3 4c6-2 12-1 9 2s-8 3-12 1" stroke="#fff" strokeWidth="1.500" />
  </Svg32>],
  ["Cool Edit Pro", true, <AppLogo size={32} />],
  ["Camera", false, <Svg32>
    <circle cx="16" cy="16" r="15" fill="#dfe3e6" stroke="#70777e" />
    <circle cx="16" cy="16" r="11.500" fill="#0f2c33" />
    <circle cx="16" cy="16" r="9.500" fill="#23848e" />
    <circle cx="16" cy="16" r="5" fill="#0d4650" />
    <path d="M9 13c2-5 7-6 10-5l-4 5z" fill="#7fdadf" />
    <path d="M18 22l5-6c0 4-2 6-5 6z" fill="#49b5bc" />
  </Svg32>],
  ["HD Player", false, <Svg32>
    <circle cx="16" cy="17" r="13" fill="#26221e" stroke="#4c4640" />
    <path d="M16 1v4M16 29v3M1 16h4M28 16h4" stroke="#666" />
    <text x="16" y="22" textAnchor="middle" fill="#f0a818" fontSize="16" fontWeight="700" fontFamily="Liberation Sans, Arial, sans-serif">HD</text>
  </Svg32>],
  ["ICQ", false, <Svg32>
    {[0, 45, 90, 135, 180, 270, 315].map((a) => (
      <ellipse key={a} cx="16" cy="7" rx="4.600" ry="6.500" fill="#3fc522" stroke="#13740c" transform={`rotate(${a} 16 16)`} />
    ))}
    <ellipse cx="16" cy="8" rx="4" ry="5.500" fill="#e0281c" stroke="#851009" transform="rotate(238 16 16)" />
    <circle cx="16" cy="16" r="4" fill="#f5d832" stroke="#b08a10" />
  </Svg32>],
  ["Winamp", false, <Svg32>
    <path d="M14 3l10-1 7 15-12 13-10-3-8-11z" fill="#fff" stroke="#222" strokeWidth="1.500" />
    <path d="M27 1L9 11l-1 6 6 1L3 31l20-13 1-6-6-1z" fill="#f39a1e" stroke="#3a2308" strokeWidth="1.300" />
    <path d="M24 4L11 12l-1 3 8-1z" fill="#fcd98a" />
  </Svg32>],
  ["Chrome", true, <Svg32>
    <circle cx="16" cy="16" r="15" fill="#f7cf3c" />
    <path d="M3 8.500A15 15 0 0 0 15 31l6-11-5-4-6 3z" fill="#1fa15d" />
    <path d="M3 8.500A15 15 0 0 1 29 9H16a7 7 0 0 0-6.500 9z" fill="#dd4b3e" />
    <circle cx="16" cy="16" r="7" fill="#fff" />
    <circle cx="16" cy="16" r="5.500" fill="#4a8af4" />
  </Svg32>],
  ["Yandex Browser", true, <Svg32>
    <circle cx="16" cy="16" r="15" fill="#f4f4f6" stroke="#ccd0d8" />
    <path d="M9 8l7 9 7-9M16 16v12" stroke="#d2161e" strokeWidth="3.500" />
  </Svg32>],
  ["Opera", false, <Svg32>
    <ellipse cx="16" cy="16" rx="15" ry="15.500" fill="#d8172b" />
    <path d="M25 4c6 5 8 18 0 24z" fill="#ee5a5a" />
    <ellipse cx="16" cy="16" rx="7" ry="11.500" fill="#a8c0dc" stroke="#9c0c1c" />
  </Svg32>],
  ["Volume", false, <Svg32>
    <path d="M1 1h23l8 15-8 15H1z" fill="#4f88c4" />
    <path d="M1 1h23l8 15H1z" fill="#7eaee0" />
    <path d="M4 12h5l7-6v20l-7-6H4z" fill="#fff" />
    <path d="M19 11c3 3 3 7 0 10M22 8c5 5 5 11 0 16" stroke="#fff" strokeWidth="2" />
  </Svg32>],
  ["Sound Editor", false, <Svg32>
    <rect x="4" y="3" width="24" height="26" rx="2" fill="#eeaf45" />
    <path d="M2 17h5v-5l2 8 2-12 3 15 2-22v30l3-24 2 14 2-10 2 8v-2h5" stroke="#fff" strokeWidth="1.800" />
  </Svg32>],
  ["Yandex", false, <Svg32>
    <path d="M3 1h20l8 15-8 15H3l-2-2V3z" fill="#fbfbfb" stroke="#7d879a" strokeWidth="1.500" />
    <text x="14" y="25" textAnchor="middle" fill="#cf1a20" fontSize="25" fontFamily="Liberation Sans, Arial, sans-serif" stroke="#cf1a20">Я</text>
  </Svg32>],
  ["Excel Viewer", false, <Svg32>
    <path d="M8 1h22v29H1V8z" fill="#cfeccb" stroke="#1f8a34" strokeWidth="1.500" />
    <path d="M5 6l14 16M19 4L6 22" stroke="#219a35" strokeWidth="4.500" />
    <path d="M12 15l19 3-2 12-19-5z" fill="#fff" stroke="#6fb77c" />
    <path d="M13 19l15 3M12 23l15 3M18 17l-2 10M24 18l-2 10" stroke="#9dcaa5" />
  </Svg32>],
  ["Excel", false, <Svg32>
    <rect x="2" y="2" width="28" height="28" fill="#2c7a34" />
    <rect x="5" y="5" width="22" height="22" fill="#e4f2dc" />
    <path d="M18 8h7v16h-7M18 12h7M18 16h7M18 20h7" stroke="#79b57a" />
    <path d="M8 9l12 14M20 9L8 23" stroke="#2f8a36" strokeWidth="4.500" />
  </Svg32>],
  ["Explorer", true, <Svg32>
    <path d="M1 4h10l2 3h8V4h10v25H1z" fill="#eccf6a" stroke="#b08d2c" />
    <path d="M4 4h3M13 8h3" stroke="#4a9a3c" strokeWidth="3" />
    <path d="M7 4h3M16 8h3" stroke="#f4f4ee" strokeWidth="3" />
    <path d="M22 7h3" stroke="#3f86c8" strokeWidth="3" />
    <path d="M1 11h31v16H1z" fill="#f8e496" stroke="#caa84a" />
    <path d="M6 31v-9l3-3h14l3 3v9h-5v-6H11v6z" fill="#9fdcf4" stroke="#3a92c0" />
  </Svg32>],
  ["Metronome", true, <Svg32>
    <path d="M14 3h9l6 26-4 2H9l-2-3z" fill="#b8835a" stroke="#5a3820" />
    <path d="M4 2l12 19M8 0l6 22" stroke="#1d1612" strokeWidth="2.500" />
    <path d="M8 24c4 4 12 3 16-4" stroke="#2c1c10" strokeWidth="1.500" />
    <circle cx="13" cy="23" r="2" fill="#222" /><circle cx="19" cy="21" r="2" fill="#222" />
  </Svg32>],
];

function Dots() {
  return (
    <svg width="9" height="32" aria-hidden="true">
      {[1, 4, 7].map((x) => (
        <line key={x} x1={x} x2={x} y1="1" y2="32" stroke="#3d4a5e" strokeWidth="1.500" strokeDasharray="1.500 2.500" />
      ))}
    </svg>
  );
}

function Tray() {
  return (
    <div className="ml-auto flex items-center pr-[2px] font-['Open_Sans','Noto_Sans',sans-serif] text-[11px] text-white">
      <Dots />
      <span className="ml-[8px] w-[20px] pb-[6px] text-center leading-[20px]">RU</span>
      <div className="ml-[13px] flex items-center">
        <button type="button" aria-label="Show hidden icons" className="w-[9px]">
          <svg viewBox="0 0 8 5" width="8" height="5"><path d="M0 5h8L4 0z" fill="#fff" /></svg>
        </button>
        <svg viewBox="0 0 18 18" width="18" height="18" className="ml-[10px]" fill="none">
          <circle cx="9" cy="9" r="8" fill="#189a50" stroke="#e6f5ec" />
          <path d="M5 5v5c0 4 5 4 5 0V5M10 9c1 4 4 3 4 3" stroke="#fff" strokeWidth="2" />
        </svg>
        <svg viewBox="0 0 18 18" width="18" height="18" className="ml-[6px]" fill="none">
          <path d="M2 6h3l4-4v14l-4-4H2z" fill="#fff" />
          <path d="M11 6c2 2 2 4 0 6M13 4c3 3 3 7 0 10M16 3c2 4 2 8 0 12" stroke="#fff" />
        </svg>
        <svg viewBox="0 0 18 18" width="18" height="18" className="ml-[6px]" fill="none">
          <path d="M3 2v14" stroke="#fff" strokeWidth="2" />
          <path d="M4 3h9v7H4z" fill="#b4c0d0" stroke="#fff" />
          <circle cx="12" cy="12" r="4.500" fill="#d2262a" />
          <path d="M10 10l4 4m0-4l-4 4" stroke="#fff" strokeWidth="1.500" />
        </svg>
        <svg viewBox="0 0 18 18" width="18" height="18" className="ml-[6px]" fill="none">
          <rect x="2" y="2" width="14" height="14" rx="1" fill="#dfe3e8" stroke="#fff" />
          <circle cx="9" cy="9" r="5.500" fill="#f6f8fa" stroke="#8a96a6" />
          <path d="M9 4.500v4.500l2-3" stroke="#4a78b8" strokeWidth="1.500" />
        </svg>
        <svg viewBox="0 0 18 18" width="18" height="18" className="ml-[6px]" fill="none">
          <path d="M6 5h10v8H6z" fill="#4c5a70" stroke="#fff" strokeWidth="1.500" />
          <path d="M8 16h7M2 2v4h4V2M4 6v7h2" stroke="#fff" strokeWidth="1.500" />
        </svg>
      </div>
      <time className="ml-[14px] flex w-[60px] flex-col items-center leading-[17px]">
        <span>13:11</span>
        <span>16.03.2017</span>
      </time>
      <button type="button" aria-label="Show desktop" className="ml-2 h-[39px] w-[14px] border border-[#4d5b70] bg-linear-to-br from-[#6c7d94] via-[#a6b4c6] to-[#56667e]" />
    </div>
  );
}

function Taskbar() {
  return (
    <div className="flex h-[40px] items-center border-t border-[#2b3a50] bg-[linear-gradient(90deg,#7f94b0_0%,#8298b4_4.5%,#a5bedb_4.9%,#a6bfdd_80%,#8094ad_83%,#7e90a8_100%)] pl-[8px]">
      <button type="button" aria-label="Start">
        <svg viewBox="0 0 38 38" width="38" height="38">
          <defs>
            <radialGradient id="orb" cx=".5" cy=".9" r=".9">
              <stop offset="0" stopColor="#52d8f4" />
              <stop offset=".5" stopColor="#1e6aa4" />
              <stop offset="1" stopColor="#8ab4d0" />
            </radialGradient>
          </defs>
          <circle cx="19" cy="19" r="17.500" fill="url(#orb)" stroke="#254764" />
          <path d="M10 12c3-2 5-2 8-1l-1 7c-3-1-5-1-8 1z" fill="#ef6a32" />
          <path d="M20 12c3 1 5 1 8-1l-1 8c-3 1-5 1-8 0z" fill="#9ccb3c" />
          <path d="M9 21c3-2 5-1 8 0l-1 7c-3-1-5-1-8 0z" fill="#4aa8ea" />
          <path d="M19 21c3 1 5 1 8-1l-1 8c-3 1-5 1-8 0z" fill="#fbd13a" />
        </svg>
      </button>
      <div className="ml-[11px]"><Dots /></div>
      <div className="ml-[10px] flex gap-1">
        {APPS.map(([label, open, icon]) => (
          <button
            key={label}
            type="button"
            aria-label={label}
            className={clsx(
              "flex h-[39px] w-[58px] items-center justify-center",
              open && "rounded-[3px] border border-[#4a5f7c] bg-linear-to-br from-[#dbe6f4] to-[#b3c8e3] shadow-[inset_0_0_0_1px_#e6eef8]"
            )}
          >
            {icon}
          </button>
        ))}
      </div>
      <Tray />
    </div>
  );
}

export default function App() {
  return (
    <div className="min-h-screen bg-white font-['Liberation_Sans',Arial,sans-serif]">
      <div className="w-5/6">
        <TitleBar />
        <MenuBar />
        <div className="bg-[#4f5763] pr-px">
          <Toolbar />
          <main className="flex border-t border-[#a3adbc]">
            <Organizer />
            <VSplit />
            <WaveDisplay />
          </main>
          <HSplit />
          <TransportRow />
          <HSplit />
          <LevelMeter />
        </div>
        <StatusBar />
        <Taskbar />
      </div>
    </div>
  );
}
